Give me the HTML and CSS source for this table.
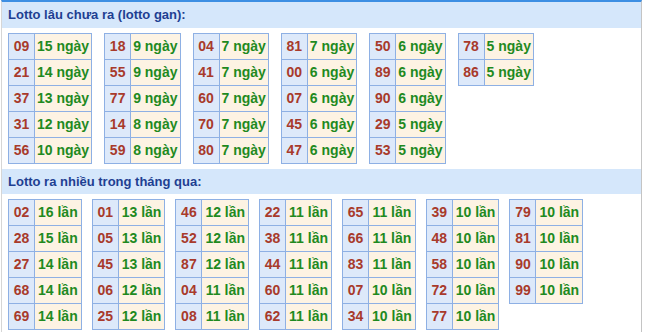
FILE: index.html
```html
<!DOCTYPE html>
<html lang="vi">
<head>
<meta charset="utf-8">
<link rel="stylesheet" href="styles.css">
</head>
<body>
<div class="box">
  <div class="head">Lotto lâu chưa ra (lotto gan):</div>
  <div class="tables t1">
    <table><tr><td class="n">09</td><td class="v">15 ngày</td></tr><tr><td class="n">21</td><td class="v">14 ngày</td></tr><tr><td class="n">37</td><td class="v">13 ngày</td></tr><tr><td class="n">31</td><td class="v">12 ngày</td></tr><tr><td class="n">56</td><td class="v">10 ngày</td></tr></table>
    <table><tr><td class="n">18</td><td class="v">9 ngày</td></tr><tr><td class="n">55</td><td class="v">9 ngày</td></tr><tr><td class="n">77</td><td class="v">9 ngày</td></tr><tr><td class="n">14</td><td class="v">8 ngày</td></tr><tr><td class="n">59</td><td class="v">8 ngày</td></tr></table>
    <table><tr><td class="n">04</td><td class="v">7 ngày</td></tr><tr><td class="n">41</td><td class="v">7 ngày</td></tr><tr><td class="n">60</td><td class="v">7 ngày</td></tr><tr><td class="n">70</td><td class="v">7 ngày</td></tr><tr><td class="n">80</td><td class="v">7 ngày</td></tr></table>
    <table><tr><td class="n">81</td><td class="v">7 ngày</td></tr><tr><td class="n">00</td><td class="v">6 ngày</td></tr><tr><td class="n">07</td><td class="v">6 ngày</td></tr><tr><td class="n">45</td><td class="v">6 ngày</td></tr><tr><td class="n">47</td><td class="v">6 ngày</td></tr></table>
    <table><tr><td class="n">50</td><td class="v">6 ngày</td></tr><tr><td class="n">89</td><td class="v">6 ngày</td></tr><tr><td class="n">90</td><td class="v">6 ngày</td></tr><tr><td class="n">29</td><td class="v">5 ngày</td></tr><tr><td class="n">53</td><td class="v">5 ngày</td></tr></table>
    <table><tr><td class="n">78</td><td class="v">5 ngày</td></tr><tr><td class="n">86</td><td class="v">5 ngày</td></tr></table>
  </div>
  <div class="head">Lotto ra nhiều trong tháng qua:</div>
  <div class="tables t2">
    <table><tr><td class="n">02</td><td class="v">16 lần</td></tr><tr><td class="n">28</td><td class="v">15 lần</td></tr><tr><td class="n">27</td><td class="v">14 lần</td></tr><tr><td class="n">68</td><td class="v">14 lần</td></tr><tr><td class="n">69</td><td class="v">14 lần</td></tr></table>
    <table><tr><td class="n">01</td><td class="v">13 lần</td></tr><tr><td class="n">05</td><td class="v">13 lần</td></tr><tr><td class="n">45</td><td class="v">13 lần</td></tr><tr><td class="n">06</td><td class="v">12 lần</td></tr><tr><td class="n">25</td><td class="v">12 lần</td></tr></table>
    <table><tr><td class="n">46</td><td class="v">12 lần</td></tr><tr><td class="n">52</td><td class="v">12 lần</td></tr><tr><td class="n">87</td><td class="v">12 lần</td></tr><tr><td class="n">04</td><td class="v">11 lần</td></tr><tr><td class="n">08</td><td class="v">11 lần</td></tr></table>
    <table><tr><td class="n">22</td><td class="v">11 lần</td></tr><tr><td class="n">38</td><td class="v">11 lần</td></tr><tr><td class="n">44</td><td class="v">11 lần</td></tr><tr><td class="n">60</td><td class="v">11 lần</td></tr><tr><td class="n">62</td><td class="v">11 lần</td></tr></table>
    <table><tr><td class="n">65</td><td class="v">11 lần</td></tr><tr><td class="n">66</td><td class="v">11 lần</td></tr><tr><td class="n">83</td><td class="v">11 lần</td></tr><tr><td class="n">07</td><td class="v">10 lần</td></tr><tr><td class="n">34</td><td class="v">10 lần</td></tr></table>
    <table><tr><td class="n">39</td><td class="v">10 lần</td></tr><tr><td class="n">48</td><td class="v">10 lần</td></tr><tr><td class="n">58</td><td class="v">10 lần</td></tr><tr><td class="n">72</td><td class="v">10 lần</td></tr><tr><td class="n">77</td><td class="v">10 lần</td></tr></table>
    <table><tr><td class="n">79</td><td class="v">10 lần</td></tr><tr><td class="n">81</td><td class="v">10 lần</td></tr><tr><td class="n">90</td><td class="v">10 lần</td></tr><tr><td class="n">99</td><td class="v">10 lần</td></tr></table>
  </div>
</div>
</body>
</html>
```
FILE: styles.css
```css
html, body {
  margin: 0;
  padding: 0;
  background: #fff;
}
body {
  font-family: "Liberation Sans", Arial, sans-serif;
  width: 646px;
  height: 332px;
  overflow: hidden;
}
.box {
  width: 639px;
  margin-left: 1px;
  border-top: 2px solid #3d8fe3;
  border-left: 1px solid #d6d6d6;
  border-right: 1px solid #c4c4c4;
  height: 340px;
}
.head {
  background: #d5e7fb;
  color: #1e3f92;
  font-weight: bold;
  font-size: 13px;
  height: 26px;
  line-height: 26px;
  padding-left: 6px;
}
.tables {
  display: flex;
  align-items: flex-start;
  padding: 5px 0 0 6px;
}
.t1 {
  gap: 12px;
  height: 136px;
}
.t2 {
  gap: 10px;
}
.tables + .head {
  height: 25px;
  line-height: 25px;
}
table {
  border-collapse: collapse;
}
td {
  border: 1px solid #8eb0e4;
  height: 25px;
  padding: 0 3px;
  font-size: 14px;
  font-weight: bold;
  text-align: center;
  line-height: 25px;
  white-space: nowrap;
}
td.n {
  background: #dde9fa;
  color: #a83a2b;
  width: 19px;
}
td.v {
  background: #fdf3e3;
  color: #1f8a1f;
}
.t1 td.v {
  padding: 0 2px;
}
```
